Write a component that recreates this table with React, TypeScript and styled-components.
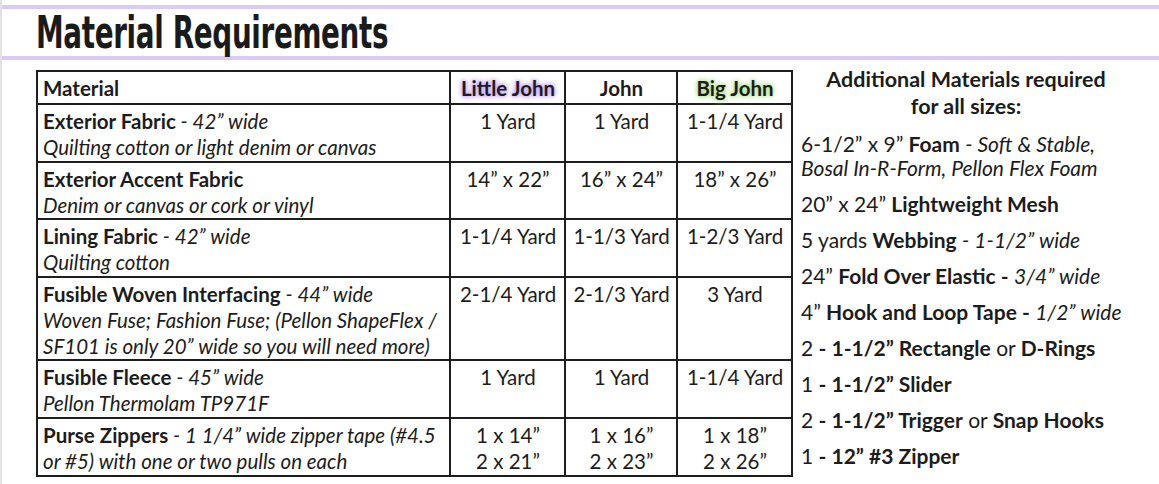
import React from "react";
import styled, { createGlobalStyle } from "styled-components";

const Global = createGlobalStyle`
  html, body { margin: 0; padding: 0; background: #ffffff; }
  body { font-family: Lato, "Open Sans", sans-serif; color: #1c1c1c; }
`;

const Page = styled.div`
  width: 1159px;
  height: 484px;
  box-sizing: border-box;
  border-left: 2px solid #e2e2e2;
  display: flex;
  flex-direction: column;
  overflow: hidden;
`;

const Rule = styled.div<{ $top: number }>`
  height: 4px;
  margin-top: ${(p) => p.$top}px;
  background: #dccaf6;
`;

const TitleBar = styled.div`
  height: 47px;
  padding-left: 34px;
  display: flex;
  align-items: center;
  overflow: visible;
`;

const Title = styled.h1`
  margin: 0;
  font-family: "DejaVu Sans Condensed", "DejaVu Sans", sans-serif;
  font-weight: 700;
  font-size: 45px;
  line-height: 1;
  color: #1a1a1a;
  transform: scaleX(0.687);
  transform-origin: left center;
  white-space: nowrap;
  letter-spacing: -0.5px;
`;

const Content = styled.div`
  display: flex;
  align-items: flex-start;
  padding-top: 10px;
  padding-left: 34px;
  gap: 8px;
`;

const Table = styled.table`
  border-collapse: collapse;
  table-layout: fixed;
  width: 755px;
  font-size: 20.5px;
`;

const Cell = styled.td<{ $w?: number; $center?: boolean; $h?: number }>`
  border: 2px solid #1e1e1e;
  ${(p) => (p.$w ? `width: ${p.$w}px;` : "")}
  ${(p) => (p.$h ? `height: ${p.$h}px;` : "")}
  padding: 3px 4px 0 5px;
  vertical-align: top;
  text-align: ${(p) => (p.$center ? "center" : "left")};
  line-height: 26px;
  box-sizing: border-box;
  white-space: nowrap;
`;

const HeadCell = styled(Cell)`
  font-weight: 700;
  vertical-align: middle;
  padding-top: 0;
`;

const Glow = styled.span<{ $c: string }>`
  text-shadow: 0 0 3px ${(p) => p.$c}, 0 0 5px ${(p) => p.$c}, 0 0 7px ${(p) => p.$c};
`;

const Name = styled.span`
  font-weight: 700;
`;

const Note = styled.span`
  font-style: italic;
`;

const Side = styled.div`
  width: 355px;
  font-size: 21px;
  margin-top: -4px;
`;

const SideHead = styled.div`
  font-weight: 700;
  text-align: center;
  font-size: 21.5px;
  line-height: 27px;
  width: 330px;
  margin-bottom: 12px;
`;

const Item = styled.div`
  line-height: 24px;
  margin-bottom: 12px;
  white-space: nowrap;
`;

const B = styled.b`
  font-weight: 700;
`;

type Row = { name: string; note?: string; sub?: string[]; vals: string[][]; h: number };

const rows: Row[] = [
  { name: "Exterior Fabric", note: "42” wide", sub: ["Quilting cotton or light denim or canvas"], vals: [["1 Yard"], ["1 Yard"], ["1-1/4 Yard"]], h: 58 },
  { name: "Exterior Accent Fabric", sub: ["Denim or canvas or cork or vinyl"], vals: [["14” x 22”"], ["16” x 24”"], ["18” x 26”"]], h: 57 },
  { name: "Lining Fabric", note: "42” wide", sub: ["Quilting cotton"], vals: [["1-1/4 Yard"], ["1-1/3 Yard"], ["1-2/3 Yard"]], h: 58 },
  { name: "Fusible Woven Interfacing", note: "44” wide", sub: ["Woven Fuse; Fashion Fuse; (Pellon ShapeFlex /", "SF101 is only 20” wide so you will need more)"], vals: [["2-1/4 Yard"], ["2-1/3 Yard"], ["3 Yard"]], h: 83 },
  { name: "Fusible Fleece", note: "45” wide", sub: ["Pellon Thermolam TP971F"], vals: [["1 Yard"], ["1 Yard"], ["1-1/4 Yard"]], h: 58 },
  { name: "Purse Zippers", note: "1 1/4” wide zipper tape (#4.5", sub: ["or #5) with one or two pulls on each"], vals: [["1 x 14”", "2 x 21”"], ["1 x 16”", "2 x 23”"], ["1 x 18”", "2 x 26”"]], h: 58 },
];

export default function App() {
  return (
    <>
      <Global />
      <Page>
        <Rule $top={5} />
        <TitleBar>
          <Title>Material Requirements</Title>
        </TitleBar>
        <Rule $top={0} />
        <Content>
          <Table>
            <tbody>
              <tr>
                <HeadCell $w={413} $h={33}>Material</HeadCell>
                <HeadCell $w={115} $center>
                  <Glow $c="#c8a6ff">Little John</Glow>
                </HeadCell>
                <HeadCell $w={112} $center>John</HeadCell>
                <HeadCell $w={115} $center>
                  <Glow $c="#b8e49a">Big John</Glow>
                </HeadCell>
              </tr>
              {rows.map((r) => (
                <tr key={r.name}>
                  <Cell $h={r.h}>
                    <Name>{r.name}</Name>
                    {r.note && <Note> - {r.note}</Note>}
                    {r.sub?.map((s) => (
                      <div key={s}>
                        <Note>{s}</Note>
                      </div>
                    ))}
                  </Cell>
                  {r.vals.map((v, i) => (
                    <Cell key={i} $center>
                      {v.map((line) => (
                        <div key={line}>{line}</div>
                      ))}
                    </Cell>
                  ))}
                </tr>
              ))}
            </tbody>
          </Table>
          <Side>
            <SideHead>
              Additional Materials required
              <br />
              for all sizes:
            </SideHead>
            <Item>
              6-1/2” x 9” <B>Foam</B> <Note>- Soft &amp; Stable,</Note>
              <br />
              <Note>Bosal In-R-Form, Pellon Flex Foam</Note>
            </Item>
            <Item>
              20” x 24” <B>Lightweight Mesh</B>
            </Item>
            <Item>
              5 yards <B>Webbing</B> <Note>- 1-1/2” wide</Note>
            </Item>
            <Item>
              24” <B>Fold Over Elastic -</B> <Note>3/4” wide</Note>
            </Item>
            <Item>
              4” <B>Hook and Loop Tape -</B> <Note>1/2” wide</Note>
            </Item>
            <Item>
              2 <B>- 1-1/2” Rectangle</B> or <B>D-Rings</B>
            </Item>
            <Item>
              1 <B>- 1-1/2” Slider</B>
            </Item>
            <Item>
              2 <B>- 1-1/2” Trigger</B> or <B>Snap Hooks</B>
            </Item>
            <Item>
              1 <B>- 12” #3 Zipper</B>
            </Item>
          </Side>
        </Content>
      </Page>
    </>
  );
}
